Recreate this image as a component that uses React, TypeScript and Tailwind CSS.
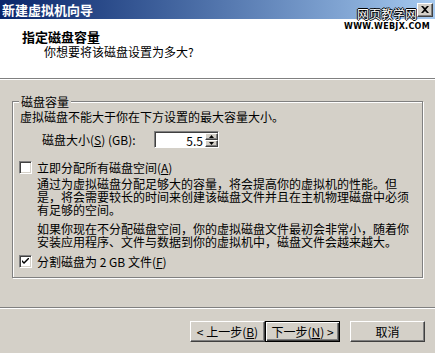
import type { ReactNode } from "react";

const raised =
  "border border-t-white border-l-white border-r-[#404040] border-b-[#404040] shadow-[inset_-1px_-1px_0_#808080] bg-[#d4d0c8]";

function Checkbox({ checked }: { checked?: boolean }) {
  return (
    <div className="w-[13px] h-[13px] shrink-0 bg-white border border-t-[#808080] border-l-[#808080] border-r-white border-b-white shadow-[inset_1px_1px_0_#404040,inset_-1px_-1px_0_#d4d0c8] flex items-center justify-center">
      {checked ? (
        <svg width="7" height="7" viewBox="0 0 7 7">
          <path d="M0 2 L0 4 L2 6 L7 1 L7 -1 L2 4 Z" fill="#000" />
        </svg>
      ) : null}
    </div>
  );
}

function Button({ children, isDefault }: { children: ReactNode; isDefault?: boolean }) {
  if (isDefault) {
    return (
      <div className="w-[75px] h-[21px] border border-black bg-[#d4d0c8] shadow-[inset_1px_1px_0_#fff,inset_-1px_-1px_0_#404040,inset_-2px_-2px_0_#808080] flex items-center justify-center text-[12px] leading-[13px]">
        {children}
      </div>
    );
  }
  return (
    <div className={`w-[75px] h-[21px] flex items-center justify-center text-[12px] leading-[13px] ${raised}`}>
      {children}
    </div>
  );
}

export default function App() {
  return (
    <div className="relative w-[435px] h-[353px] overflow-hidden bg-[#d4d0c8] text-black font-['Noto_Sans_CJK_SC',sans-serif] flex flex-col">
      {/* title bar */}
      <div className="h-[19px] shrink-0 bg-gradient-to-r from-[#0a246a] to-[#a6caf0] flex items-center justify-between pl-[2px] pr-[2px]">
        <span className="text-white font-bold text-[13px] leading-[13px]">新建虚拟机向导</span>
        <div className={`relative z-10 w-[16px] h-[14px] flex items-center justify-center ${raised}`}>
          <svg width="8" height="7" viewBox="0 0 8 7">
            <path d="M0 0 L2 0 L4 2 L6 0 L8 0 L5 3.5 L8 7 L6 7 L4 5 L2 7 L0 7 L3 3.5 Z" fill="#000" />
          </svg>
        </div>
      </div>

      {/* header */}
      <div className="h-[59px] shrink-0 bg-white pt-[11px]">
        <div className="pl-[22px] font-bold text-[13px] leading-[13px]">指定磁盘容量</div>
        <div className="pl-[44px] mt-[3px] text-[12px] leading-[12px]">你想要将该磁盘设置为多大?</div>
      </div>
      <div className="h-[2px] shrink-0 border-t border-t-[#808080] border-b border-b-white" />

      {/* group box */}
      <div className="relative mt-[21px] ml-[12px] w-[411px] border border-[#808080] shadow-[inset_1px_1px_0_#fff,1px_1px_0_#fff] pb-[9px] text-[12px] leading-[13px]">
        <span className="absolute -top-[7px] left-[6px] px-[2px] bg-[#d4d0c8] leading-[13px]">磁盘容量</span>
        <div className="mt-[8px] pl-[7px]">虚拟磁盘不能大于你在下方设置的最大容量大小。</div>

        <div className="mt-[8px] flex items-center h-[17px]">
          <span className="ml-[29px] w-[112px]">
            磁盘大小(<u>S</u>) (GB):
          </span>
          <div className="w-[65px] h-[17px] bg-white border border-t-[#808080] border-l-[#808080] border-r-white border-b-white shadow-[inset_1px_1px_0_#404040] flex items-stretch">
            <div className="flex-1 flex items-center justify-end pr-[2px] pt-[1px]">5.5</div>
            <div className="w-[13px] flex flex-col pt-[1px]">
              <div className={`flex-1 flex items-center justify-center ${raised}`}>
                <svg width="5" height="3" viewBox="0 0 5 3">
                  <path d="M2.5 0 L5 3 L0 3 Z" fill="#000" />
                </svg>
              </div>
              <div className={`flex-1 flex items-center justify-center ${raised}`}>
                <svg width="5" height="3" viewBox="0 0 5 3">
                  <path d="M0 0 L5 0 L2.5 3 Z" fill="#000" />
                </svg>
              </div>
            </div>
          </div>
        </div>

        <div className="mt-[13px] ml-[6px] flex items-center gap-[5px] h-[13px]">
          <Checkbox />
          <span>
            立即分配所有磁盘空间(<u>A</u>)
          </span>
        </div>

        <div className="mt-[3px] pl-[24px]">
          <div>通过为虚拟磁盘分配足够大的容量，将会提高你的虚拟机的性能。但</div>
          <div>是，将会需要较长的时间来创建该磁盘文件并且在主机物理磁盘中必须</div>
          <div>有足够的空间。</div>
        </div>

        <div className="mt-[6px] pl-[24px]">
          <div>如果你现在不分配磁盘空间，你的虚拟磁盘文件最初会非常小，随着你</div>
          <div>安装应用程序、文件与数据到你的虚拟机中，磁盘文件会越来越大。</div>
        </div>

        <div className="mt-[7px] ml-[6px] flex items-center gap-[5px] h-[13px]">
          <Checkbox checked />
          <span>
            分割磁盘为 2 GB 文件(<u>F</u>)
          </span>
        </div>
      </div>

      <div className="mt-[29px] h-[2px] shrink-0 border-t border-t-[#808080] border-b border-b-white" />

      {/* buttons */}
      <div className="mt-[12px] flex justify-end pr-[10px]">
        <Button>
          &lt; 上一步(<u>B</u>)
        </Button>
        <Button isDefault>
          下一步(<u>N</u>) &gt;
        </Button>
        <div className="w-[10px]" />
        <Button>取消</Button>
      </div>

      {/* watermark */}
      <div className="absolute left-[350px] top-[7px] w-[74px] flex flex-col items-center pointer-events-none">
        <span className="text-white text-[12px] leading-[13px] [text-shadow:1px_0_0_#000,-1px_0_0_#000,0_1px_0_#000,0_-1px_0_#000]">
          网页教学网
        </span>
        <span className="mt-[3px] font-['DejaVu_Sans',sans-serif] font-bold text-[8px] leading-[8px] tracking-[0.3px]">
          WWW.WEBJX.COM
        </span>
      </div>
    </div>
  );
}
